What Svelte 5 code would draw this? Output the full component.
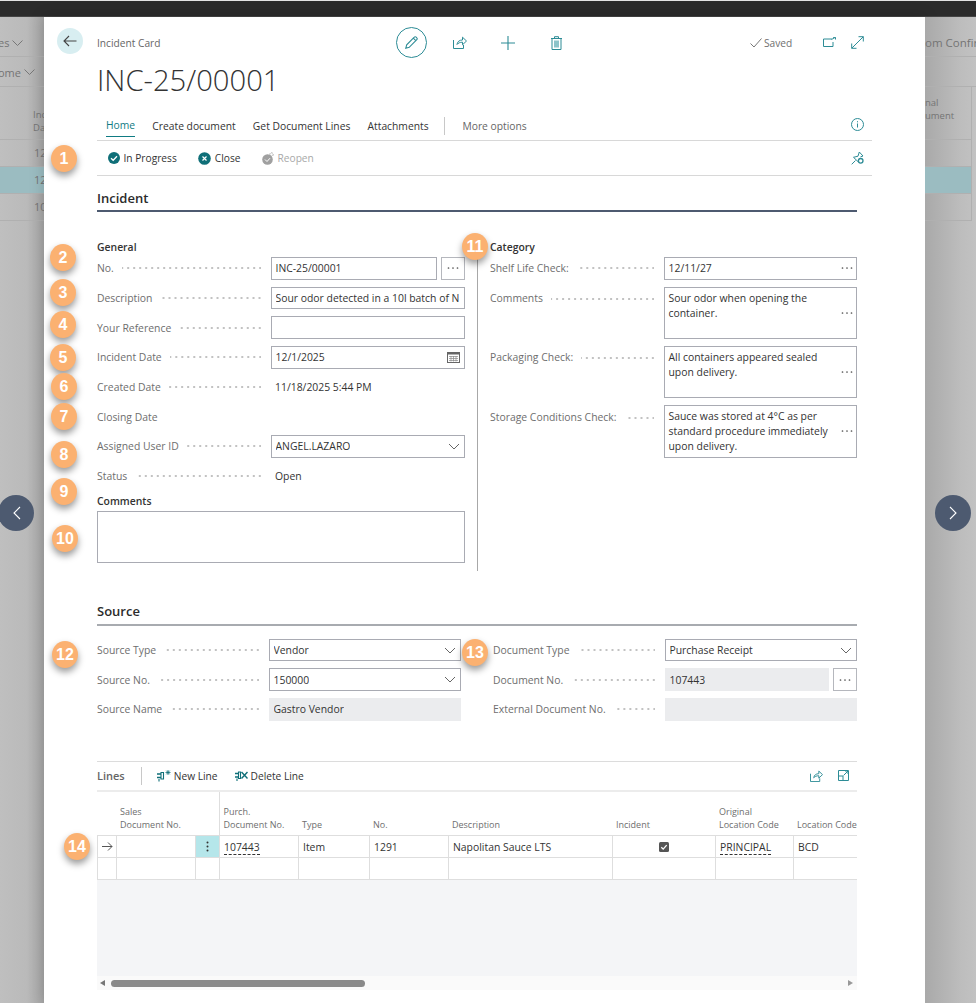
<script>
  const tabs = ["Create document", "Get Document Lines", "Attachments"];
  const general = [
    { label: "No.", value: "INC-25/00001", kind: "lookup" },
    { label: "Description", value: "Sour odor detected in a 10l batch of N", kind: "input" },
    { label: "Your Reference", value: "", kind: "input" },
    { label: "Incident Date", value: "12/1/2025", kind: "date" },
    { label: "Created Date", value: "11/18/2025 5:44 PM", kind: "text" },
    { label: "Closing Date", value: "", kind: "text", nodots: true },
    { label: "Assigned User ID", value: "ANGEL.LAZARO", kind: "select" },
    { label: "Status", value: "Open", kind: "text" }
  ];
  const category = [
    { label: "Shelf Life Check:", lines: ["12/11/27"], span: 1 },
    { label: "Comments", lines: ["Sour odor when opening the", "container."], span: 2 },
    { label: "Packaging Check:", lines: ["All containers appeared sealed", "upon delivery."], span: 2 },
    { label: "Storage Conditions Check:", lines: ["Sauce was stored at 4°C as per", "standard procedure immediately", "upon delivery."], span: 2 }
  ];
  const sourceLeft = [
    { label: "Source Type", value: "Vendor", kind: "select" },
    { label: "Source No.", value: "150000", kind: "select" },
    { label: "Source Name", value: "Gastro Vendor", kind: "readonly" }
  ];
  const sourceRight = [
    { label: "Document Type", value: "Purchase Receipt", kind: "select" },
    { label: "Document No.", value: "107443", kind: "readonly-lookup" },
    { label: "External Document No.", value: "", kind: "readonly" }
  ];
  const columns = [19, 79, 24, 79, 71, 79, 164, 103, 78, 80];
  const badges = [
    [1, 64, 158], [2, 63, 257], [3, 63, 292], [4, 63, 324], [5, 63, 357], [6, 64, 386], [7, 64, 416],
    [8, 64, 454], [9, 64, 491], [10, 65, 538], [11, 475, 246], [12, 65, 654], [13, 475, 652], [14, 77, 846]
  ];
</script>

{#snippet dots()}
  <svg class="dots3" width="14" height="4" viewBox="0 0 14 4"><circle cx="2.5" cy="2" r="0.85"/><circle cx="7" cy="2" r="0.85"/><circle cx="11.5" cy="2" r="0.85"/></svg>
{/snippet}

{#snippet chevron()}
  <svg class="chev" width="12" height="7" viewBox="0 0 12 7"><path d="M1 1l5 5 5-5" fill="none" stroke="#666" stroke-width="1"/></svg>
{/snippet}

{#snippet field(f)}
  <div class="row">
    <span class="lab">{f.label}</span>
    {#if !f.nodots}<span class="leader"></span>{/if}
  </div>
  {#if f.kind === "lookup" || f.kind === "readonly-lookup"}
    <div class="with-btn">
      <div class="box" class:ro={f.kind === "readonly-lookup"}><span class="val">{f.value}</span></div>
      <div class="box btn">{@render dots()}</div>
    </div>
  {:else if f.kind === "input"}
    <div class="box"><span class="val">{f.value}</span></div>
  {:else if f.kind === "readonly"}
    <div class="box ro"><span class="val">{f.value}</span></div>
  {:else if f.kind === "date"}
    <div class="box">
      <span class="val">{f.value}</span>
      <svg width="13" height="12" viewBox="0 0 13 12"><rect x="0.5" y="1.5" width="12" height="10" fill="none" stroke="#666"/><rect x="0.5" y="1" width="12" height="2.5" fill="#666"/><path d="M2 5.5h9M2 7.5h9M2 9.5h9M4 5v5.5M6.5 5v5.5M9 5v5.5" stroke="#888" stroke-width="0.7"/></svg>
    </div>
  {:else if f.kind === "select"}
    <div class="box"><span class="val">{f.value}</span>{@render chevron()}</div>
  {:else}
    <div class="plain">{f.value}</div>
  {/if}
{/snippet}

<div class="page">
  <div class="topbar"></div>
  <div class="stage">
    <div class="side left">
      <div class="bg-row tall"><span class="bg-title">es</span><svg width="11" height="6" viewBox="0 0 11 6"><path d="M.5.5l5 5 5-5" fill="none" stroke="#777"/></svg></div>
      <div class="bg-row nav"><span>ome</span><svg width="11" height="6" viewBox="0 0 11 6"><path d="M.5.5l5 5 5-5" fill="none" stroke="#777"/></svg></div>
      <div class="bg-head"><span>Inc<br />Da</span></div>
      <div class="bg-cell">12</div>
      <div class="bg-cell sel">12</div>
      <div class="bg-cell">10</div>
    </div>

    <main class="modal">
      <header class="head">
        <button class="back" aria-label="Back">
          <svg width="14" height="12" viewBox="0 0 14 12"><path d="M13.5 6H1M6 1L1 6l5 5" fill="none" stroke="#444" stroke-width="1.1"/></svg>
        </button>
        <span class="crumb">Incident Card</span>
        <div class="acts">
          <span class="pencil">
            <svg width="15" height="15" viewBox="0 0 15 15"><path d="M1.8 13.2l.9-3.4 7.6-7.6a1.3 1.3 0 0 1 1.9 0l.6.6a1.3 1.3 0 0 1 0 1.9l-7.6 7.6zM9.3 3.2l2.5 2.5" fill="none" stroke="#2d8c96" stroke-width="1.1"/></svg>
          </span>
          <svg class="share" width="14" height="13" viewBox="0 0 14 13"><path d="M.5 4v8.500h10V9M4 8.500C4.300 5.500 6.500 4 9.500 4V1.200L13.500 5l-4 3.800V6.200C7 6.200 5.200 7 4 8.500z" fill="none" stroke="#2d8c96"/></svg>
          <svg class="plus" width="14" height="14" viewBox="0 0 14 14"><path d="M7 0v14M0 7h14" stroke="#2d8c96" stroke-width="1.1"/></svg>
          <svg class="trash" width="11" height="14" viewBox="0 0 11 14"><path d="M1 2.500h9V13.500H1zM0 2.500h11M3.500 2.500V.7h4v1.800" fill="none" stroke="#2d8c96"/><rect x="3" y="4.500" width="5" height="7" fill="#8cc3c9"/></svg>
        </div>
        <div class="status">
          <svg width="12" height="10" viewBox="0 0 12 10"><path d="M.5 5.500l3.500 3.500 7.500-8.500" fill="none" stroke="#777"/></svg>
          <span>Saved</span>
        </div>
        <svg class="open" width="13" height="10" viewBox="0 0 13 10"><path d="M9 2H.5v7.500H10V5M8.500 2.500L12 .5M10 .3h2.500v2.200" fill="none" stroke="#2d8c96"/></svg>
        <svg class="expand" width="13" height="13" viewBox="0 0 13 13"><path d="M.7 12.300L12.300.7M7.500.7h4.800v4.800M.7 7.500v4.800h4.800" fill="none" stroke="#2d8c96"/></svg>
      </header>

      <div class="body">
        <h1>INC-25/00001</h1>

        <nav class="tabs">
          <span class="tab on">Home</span>
          {#each tabs as t}<span class="tab">{t}</span>{/each}
          <i class="vsep"></i>
          <span class="tab more">More options</span>
          <svg class="info" width="13" height="13" viewBox="0 0 13 13"><circle cx="6.500" cy="6.500" r="6" fill="none" stroke="#2d8c96"/><path d="M6.500 5.500v4M6.500 3.200v1.100" stroke="#2d8c96"/></svg>
        </nav>

        <div class="actionbar">
          <span class="act"><svg width="12" height="12" viewBox="0 0 12 12"><circle cx="6" cy="6" r="6" fill="#0f6f78"/><path d="M3 6.200l2.200 2.100 3.800-4" fill="none" stroke="#fff" stroke-width="1.300"/></svg>In Progress</span>
          <span class="act"><svg width="13" height="13" viewBox="0 0 13 13"><circle cx="6.500" cy="6.500" r="6.300" fill="#0f6f78"/><path d="M4.500 4.500l4 4M8.500 4.500l-4 4" stroke="#fff" stroke-width="1.200"/></svg>Close</span>
          <span class="act off"><svg width="12" height="13" viewBox="0 0 12 13"><circle cx="5.500" cy="7.500" r="5.300" fill="#a0a0a0"/><path d="M3 7.500l2 2 3-3.300" fill="none" stroke="#fff"/><circle cx="9.500" cy="2.500" r="1.700" fill="none" stroke="#a0a0a0" stroke-dasharray="1.500 .8"/></svg>Reopen</span>
          <svg class="pin" width="13" height="14" viewBox="0 0 13 14"><path d="M.7 13.300l3.800-3.800M2.500 6.300L7 5.200 8.300 1l3.700 4-2.500.8M2.500 6.300l4.800 4.600" fill="none" stroke="#2d8c96"/><circle cx="9.700" cy="9.800" r="2.300" fill="none" stroke="#2d8c96" stroke-width="1.300"/></svg>
        </div>

        <div class="content">
          <h2 class="first">Incident</h2>

          <section class="twocol incident">
            <div class="col">
              <h3>General</h3>
              <div class="fields">
                {#each general as f}{@render field(f)}{/each}
              </div>
              <h3 class="ch">Comments</h3>
              <div class="box area"></div>
            </div>
            <div class="divider"></div>
            <div class="col">
              <h3>Category</h3>
              <div class="fields cat">
                {#each category as c}
                  <div class="row" class:span2={c.span === 2}><span class="lab">{c.label}</span><span class="leader"></span></div>
                  <div class="box multi" class:span2={c.span === 2}>
                    <div class="lines">{#each c.lines as l}<div>{l}</div>{/each}</div>
                    {@render dots()}
                  </div>
                {/each}
              </div>
            </div>
          </section>

          <h2 class="second">Source</h2>
          <section class="src">
            <div class="fields s-left">
              {#each sourceLeft as f}{@render field(f)}{/each}
            </div>
            <div class="fields s-right">
              {#each sourceRight as f}{@render field(f)}{/each}
            </div>
          </section>

          <div class="lines-bar">
            <strong>Lines</strong>
            <i class="vsep"></i>
            <span class="act"><svg width="14" height="12" viewBox="0 0 14 12"><path d="M0 4h4M0 7.500h4" stroke="#0f6f78" stroke-width="1.500"/><path d="M4 2.500h2.500V9H4zM2 9v2.500" fill="none" stroke="#0f6f78" stroke-width="1.100"/><path d="M8.500 2.500h5M11 0v5M9.300.7l3.400 3.600M12.700.7L9.300 4.300" stroke="#0f6f78" stroke-width="0.800"/></svg>New Line</span>
            <span class="act delete"><svg width="13" height="12" viewBox="0 0 13 12"><path d="M0 3.500h3.500M0 7h3.500" stroke="#0f6f78" stroke-width="1.500"/><path d="M3.500 2H5.500v6.500H3.500zM2 8.500V11" fill="none" stroke="#0f6f78" stroke-width="1.100"/><path d="M6.500 2l6 6.500M12.500 2l-6 6.500" stroke="#0f6f78" stroke-width="1.400"/></svg>Delete Line</span>
            <svg class="l-share" width="13" height="12" viewBox="0 0 14 13"><path d="M.5 4v8.500h10V9M4 8.500C4.300 5.500 6.500 4 9.500 4V1.200L13.500 5l-4 3.800V6.200C7 6.200 5.200 7 4 8.500z" fill="none" stroke="#2d8c96"/></svg>
            <svg class="l-open" width="11" height="11" viewBox="0 0 11 11"><path d="M.5.500h10v10H.5zM.5 6h4.500v4.500M5.500 5.500L10 1M7 1h3v3" fill="none" stroke="#2d8c96"/></svg>
          </div>

          <div class="grid">
            <table>
              <colgroup>{#each columns as w}<col style="width:{w}px" />{/each}</colgroup>
              <thead>
                <tr>
                  <th></th>
                  <th colspan="2" class="sales">Sales<br />Document No.</th>
                  <th>Purch.<br />Document No.</th>
                  <th>Type</th>
                  <th>No.</th>
                  <th>Description</th>
                  <th>Incident</th>
                  <th>Original<br />Location Code</th>
                  <th>Location Code</th>
                </tr>
              </thead>
              <tbody>
                <tr>
                  <td class="mark"><svg width="11" height="9" viewBox="0 0 11 9"><path d="M0 4.500h10M6 .5l4 4-4 4" fill="none" stroke="#555"/></svg></td>
                  <td></td>
                  <td class="menu"><svg width="3" height="11" viewBox="0 0 3 11"><circle cx="1.500" cy="1.500" r="1" fill="#333"/><circle cx="1.500" cy="5.500" r="1" fill="#333"/><circle cx="1.500" cy="9.500" r="1" fill="#333"/></svg></td>
                  <td><span class="link">107443</span></td>
                  <td>Item</td>
                  <td>1291</td>
                  <td>Napolitan Sauce LTS</td>
                  <td class="chk"><svg width="10" height="10" viewBox="0 0 10 10"><rect width="10" height="10" rx="1.500" fill="#555"/><path d="M2.300 5.200l1.900 1.900 3.500-4" fill="none" stroke="#fff" stroke-width="1.300"/></svg></td>
                  <td><span class="link">PRINCIPAL</span></td>
                  <td>BCD</td>
                </tr>
                <tr>{#each columns as _}<td></td>{/each}</tr>
              </tbody>
            </table>
            <div class="filler"></div>
            <div class="scroll">
              <i class="arr l"></i>
              <i class="thumb"></i>
              <i class="arr r"></i>
            </div>
          </div>
        </div>
      </div>
    </main>

    <div class="side right">
      <div class="bg-row tall"><span class="bg-title">om Confir</span></div>
      <div class="bg-row nav"></div>
      <div class="bg-head"><span>nal<br />ument</span></div>
      <div class="bg-cell"></div>
      <div class="bg-cell sel"></div>
      <div class="bg-cell"></div>
    </div>
  </div>

  <button class="pager prev" aria-label="Previous"><svg width="9" height="14" viewBox="0 0 9 14"><path d="M8 1L2 7l6 6" fill="none" stroke="#fff" stroke-width="1.100"/></svg></button>
  <button class="pager next" aria-label="Next"><svg width="9" height="14" viewBox="0 0 9 14"><path d="M1 1l6 6-6 6" fill="none" stroke="#fff" stroke-width="1.100"/></svg></button>

  {#each badges as [n, x, y]}
    <span class="badge" style="left:{x - 13}px;top:{y - 13.500}px">{n}</span>
  {/each}
</div>

<style>
  :global(body) {
    background: #bdbdbd;
  }

  .page {
    position: relative;
    width: 976px;
    height: 1003px;
    overflow: hidden;
    font-family: "Open Sans", "Liberation Sans", sans-serif;
    font-size: 10.4px;
    color: #333;
    display: flex;
    flex-direction: column;
    border-top: 1px solid #e4e4e4;
    box-sizing: border-box;
  }

  .topbar {
    height: 15px;
    background: #2b2b2b;
    flex: none;
    border-bottom: 1px solid #444;
  }

  .stage {
    flex: 1;
    display: grid;
    grid-template-columns: 44px 881px 51px;
    min-height: 0;
  }

  /* dimmed list page behind the card */
  .side {
    overflow: hidden;
    color: #747474;
    white-space: nowrap;
  }

  .side.left {
    background: linear-gradient(90deg, #bfbfbf 0, #bababa 60%, #a6a6a6 100%);
    text-align: right;
  }

  .side.right {
    background: linear-gradient(90deg, #a9a9a9 0, #bdbdbd 70%, #c2c2c2 100%);
  }

  .bg-row {
    display: flex;
    align-items: center;
    gap: 3px;
    border-bottom: 1px solid #b0b0b0;
    font-size: 11px;
    box-sizing: border-box;
  }

  .left .bg-row {
    justify-content: flex-start;
    margin-left: -2px;
  }

  .tall {
    height: 40px;
  }

  .right .tall {
    font-size: 11.5px;
  }

  .bg-title,
  .tall svg {
    margin-top: 12px;
  }

  .nav {
    height: 30px;
  }

  .nav span {
    margin-top: 2px;
  }

  .bg-head {
    height: 53px;
    border-bottom: 1px solid #b0b0b0;
    font-size: 9.5px;
    line-height: 13px;
    padding-top: 9px;
    box-sizing: border-box;
    text-align: left;
  }

  .left .bg-head {
    padding-left: 33px;
    padding-top: 21px;
  }

  .bg-cell {
    height: 27px;
    line-height: 26px;
    border-bottom: 1px solid #b0b0b0;
    box-sizing: border-box;
    text-align: left;
    font-size: 11px;
  }

  .left .bg-cell {
    padding-left: 34px;
  }

  .bg-cell.sel {
    background: #9bbcc1;
  }

  .right .bg-cell,
  .right .bg-head {
    margin-right: 4px;
    border-right: 1px solid #b0b0b0;
  }

  .modal {
    background: #fff;
    overflow: hidden;
    box-shadow: 0 0 14px rgba(0, 0, 0, 0.18);
  }

  .head {
    height: 43px;
    display: flex;
    align-items: center;
    padding-top: 7px;
    padding-left: 13px;
    box-sizing: border-box;
  }

  .back {
    width: 26px;
    height: 26px;
    border-radius: 50%;
    border: 0;
    padding: 0;
    background: #d8eef1;
    display: flex;
    align-items: center;
    justify-content: center;
    margin-right: 14px;
    margin-top: -2px;
  }

  .crumb {
    width: 299px;
    flex: none;
    color: #666;
    padding-top: 2px;
    font-size: 10.2px;
  }

  .acts {
    width: 354px;
    flex: none;
    display: flex;
    align-items: center;
    padding-top: 1px;
  }

  .pencil {
    width: 29px;
    height: 29px;
    border: 1px solid #2d8c96;
    border-radius: 50%;
    display: flex;
    align-items: center;
    justify-content: center;
    margin-right: 26px;
  }

  .plus {
    margin-left: 34px;
  }

  .trash {
    margin-left: 36px;
  }

  .status {
    display: flex;
    align-items: center;
    gap: 2px;
    width: 72px;
    color: #707070;
    padding-top: 1px;
    font-size: 10.2px;
  }

  .open {
    margin-right: 15px;
    margin-left: 1px;
    flex: none;
  }

  .expand {
    flex: none;
  }

  .body {
    padding: 0 53px;
  }

  h1 {
    margin: 0;
    height: 41px;
    line-height: 40px;
    font-size: 29.2px;
    font-weight: 300;
    color: #333;
  }

  .tabs {
    height: 40px;
    box-sizing: border-box;
    padding: 11px 0 0 9px;
    display: flex;
    align-items: flex-start;
    gap: 17.2px;
    border-bottom: 1px solid #d8d8d8;
    font-size: 10.3px;
  }

  .tab {
    line-height: 20px;
    height: 20px;
    margin-top: 4px;
    color: #333;
    white-space: nowrap;
  }

  .tab.on {
    color: #0f7b83;
    border-bottom: 1.5px solid #0f7b83;
    line-height: 19px;
  }

  .tab.more {
    color: #666;
  }

  .tabs .vsep {
    margin-top: 5px;
    margin-left: -1.5px;
    height: 18px;
  }

  .vsep {
    width: 1px;
    background: #c8c8c8;
    display: block;
    flex: none;
  }

  .info {
    margin-left: auto;
    margin-right: 8px;
    margin-top: 6px;
  }

  .actionbar {
    height: 35px;
    box-sizing: border-box;
    border-bottom: 1px solid #d8d8d8;
    display: flex;
    align-items: center;
    padding-left: 11px;
    gap: 21px;
    font-size: 10.2px;
  }

  .act {
    display: inline-flex;
    align-items: center;
    gap: 4px;
    white-space: nowrap;
  }

  .actionbar .act:first-child {
    gap: 3.5px;
  }

  .act.off {
    color: #a9a9a9;
  }

  .pin {
    margin-left: auto;
    margin-right: 8px;
  }

  .content {
    width: 760px;
  }

  h2 {
    margin: 0;
    font-size: 13px;
    font-weight: 600;
    color: #2b2b2b;
    line-height: 18px;
  }

  h2.first {
    padding-top: 13px;
    padding-bottom: 3px;
    border-bottom: 2px solid #4d5a70;
  }

  h2.second {
    padding-bottom: 4px;
    border-bottom: 2px solid #a8abb0;
    margin-top: 31px;
  }

  h3 {
    margin: 0;
    font-size: 10.4px;
    font-weight: 600;
    color: #333;
    line-height: 14px;
  }

  .twocol {
    display: grid;
    grid-template-columns: 368px 1fr 367px;
    padding-top: 28px;
  }

  .col:first-child {
    padding-bottom: 8px;
  }

  .divider {
    width: 1px;
    background: #a8a8a8;
    justify-self: center;
    margin-top: 18px;
  }

  .fields {
    display: grid;
    grid-template-columns: 174px 1fr;
    grid-auto-rows: 22.67px;
    row-gap: 7px;
    margin-top: 3px;
  }

  .span2 {
    grid-row: span 2;
  }

  .row {
    display: flex;
    align-items: center;
    gap: 8px;
    min-width: 0;
    padding-right: 10px;
    white-space: nowrap;
  }

  .row.span2 {
    align-items: flex-start;
    padding-top: 4.5px;
  }

  .row.span2 .leader {
    margin-top: 7px;
  }

  .lab {
    color: #6e6e6e;
  }

  .leader {
    flex: 1;
    height: 2px;
    background: radial-gradient(circle at 5px 1px, #c2c2c2 0.8px, transparent 1px) right / 6px 2px repeat-x;
  }

  .box {
    border: 1px solid #a9abb3;
    box-sizing: border-box;
    display: flex;
    align-items: center;
    justify-content: space-between;
    padding: 0 4px 0 3.5px;
    min-width: 0;
    background: #fff;
    height: 100%;
    color: #333;
  }

  .val {
    white-space: nowrap;
    overflow: hidden;
  }

  .box.ro {
    background: #ebecee;
    border-color: #ebecee;
  }

  .plain {
    padding-left: 4px;
    display: flex;
    align-items: center;
  }

  .with-btn {
    display: grid;
    grid-template-columns: 1fr 24px;
    gap: 4px;
    min-width: 0;
  }

  .box.btn {
    justify-content: center;
    padding: 0;
    border-color: #b5b7bd;
  }

  .dots3 {
    fill: #555;
    flex: none;
  }

  .multi {
    padding-right: 2px;
    overflow: hidden;
  }

  .lines {
    line-height: 15px;
    white-space: nowrap;
  }

  .multi.span2 .lines {
    align-self: flex-start;
    margin-top: 3px;
  }

  .ch {
    margin-top: 7px;
  }

  .area {
    height: 51.5px;
    margin-top: 3px;
  }

  .src {
    display: grid;
    grid-template-columns: 364px 364px;
    column-gap: 32px;
    padding-top: 13px;
  }

  .src .fields {
    margin-top: 0;
    grid-template-columns: 172px 1fr;
  }

  .lines-bar {
    margin-top: 40px;
    height: 31px;
    box-sizing: border-box;
    border-top: 1px solid #dcdcdc;
    border-bottom: 2px solid #ececec;
    display: flex;
    align-items: center;
    gap: 16px;
    width: 760px;
    font-size: 10.2px;
  }

  .lines-bar strong {
    font-size: 11px;
    font-weight: 600;
    color: #666;
  }

  .lines-bar .vsep {
    height: 18px;
    margin-right: -1px;
  }

  .lines-bar .act {
    gap: 3px;
  }

  .lines-bar .delete {
    margin-left: 1px;
  }

  .l-share {
    margin-left: auto;
    margin-right: -1px;
  }

  .l-open {
    margin-right: 8px;
  }

  .grid {
    width: 760px;
    overflow: hidden;
  }

  table {
    border-collapse: collapse;
    table-layout: fixed;
    width: 776px;
  }

  th {
    height: 44px;
    box-sizing: border-box;
    font-weight: 400;
    font-size: 9px;
    line-height: 12.5px;
    color: #6e6e6e;
    text-align: left;
    vertical-align: bottom;
    padding: 0 3.5px 4px;
    white-space: nowrap;
    overflow: hidden;
    border-bottom: 1px solid #dedede;
  }

  th.sales {
    border-right: 1px solid #dedede;
  }

  td {
    height: 22px;
    box-sizing: border-box;
    border: 1px solid #dedede;
    padding: 0 4px;
    white-space: nowrap;
    overflow: hidden;
    color: #333;
  }

  td.mark,
  td.menu,
  td.chk {
    text-align: center;
    padding: 0;
    line-height: 0;
  }

  td.menu {
    background: #b5e6ea;
  }

  .link {
    border-bottom: 1px dashed #333;
  }

  .filler {
    height: 96px;
    background: #f4f5f7;
  }

  .scroll {
    height: 14px;
    background: #fafafa;
    display: flex;
    align-items: center;
    padding-left: 3px;
  }

  .thumb {
    display: block;
    width: 254px;
    height: 7px;
    border-radius: 4px;
    background: #8a8a8a;
    margin-left: 6px;
  }

  .arr {
    display: block;
    width: 0;
    height: 0;
    border: 3.5px solid transparent;
  }

  .arr.l {
    border-right: 5px solid #777;
    border-left: 0;
  }

  .arr.r {
    border-left: 5px solid #999;
    border-right: 0;
    margin-left: auto;
    margin-right: 4px;
  }

  .pager {
    position: absolute;
    top: 494px;
    width: 36px;
    height: 36px;
    border-radius: 50%;
    border: 0;
    padding: 0;
    background: #4d5a70;
    display: flex;
    align-items: center;
    justify-content: center;
  }

  .prev {
    left: -2px;
  }

  .next {
    left: 935px;
  }

  .badge {
    position: absolute;
    width: 26px;
    height: 27px;
    border-radius: 50%;
    background: #fbb171;
    color: #fff;
    font-family: "Liberation Sans", Arial, sans-serif;
    font-weight: 700;
    font-size: 16px;
    line-height: 27px;
    text-align: center;
    box-shadow: 0 4px 7px rgba(0, 0, 0, 0.4);
    margin-top: -1px;
  }
</style>
